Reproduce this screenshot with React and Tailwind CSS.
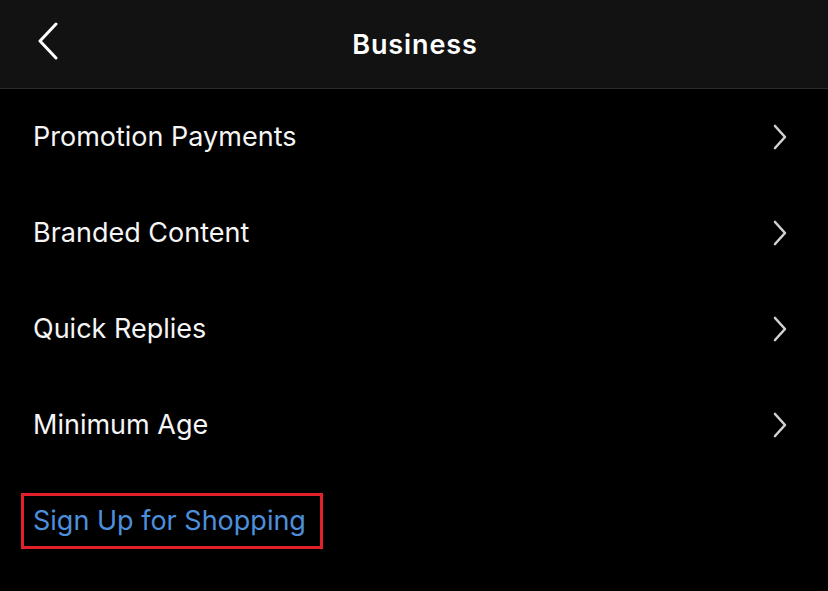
import React from "react";

const Chevron = () => (
  <svg width="16" height="26" viewBox="0 0 16 26" fill="none" className="text-[#d0d0d0]">
    <path d="M3 2 L13 13 L3 24" stroke="currentColor" strokeWidth="2.6" strokeLinecap="round" strokeLinejoin="round" />
  </svg>
);

const rows = ["Promotion Payments", "Branded Content", "Quick Replies", "Minimum Age"];

export default function App() {
  return (
    <div className="w-[828px] h-[591px] bg-black text-white overflow-hidden" style={{ fontFamily: "Inter, 'Noto Sans', sans-serif" }}>
      <div className="relative h-[89px] bg-[#121212] border-b border-[#2c2c2c] flex items-center justify-center">
        <button className="absolute left-[36px] top-[22px]">
          <svg width="24" height="38" viewBox="0 0 24 38" fill="none">
            <path d="M20 2 L4 19 L20 36" stroke="white" strokeWidth="3" strokeLinecap="round" strokeLinejoin="round" />
          </svg>
        </button>
        <div className="text-[27px] font-semibold tracking-[0.9px] pt-[2px] pl-[2px]">Business</div>
      </div>
      <div className="flex flex-col">
        {rows.map((r) => (
          <div key={r} className="h-[96px] flex items-center justify-between pl-[33px] pr-[40px]">
            <span className="text-[27px] text-[#f5f5f5]">{r}</span>
            <Chevron />
          </div>
        ))}
        <div className="h-[96px] flex items-center pl-[21px]">
          <div className="border-[3px] border-[#e3212b] pl-[9px] pr-[14px] h-[56px] flex items-center">
            <span className="text-[27px] text-[#4c8fdc]">Sign Up for Shopping</span>
          </div>
        </div>
      </div>
    </div>
  );
}
